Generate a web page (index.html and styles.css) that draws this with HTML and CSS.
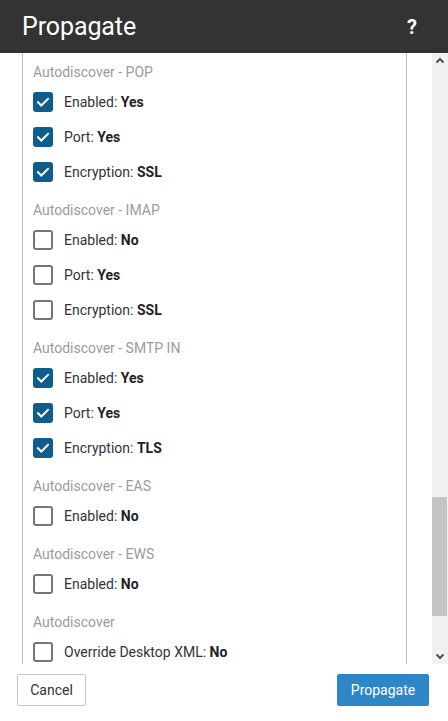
FILE: index.html
```html
<!DOCTYPE html>
<html>
<head>
<meta charset="utf-8">
<link rel="stylesheet" href="styles.css">
</head>
<body>
<div class="dialog">
  <header class="titlebar">
    <h1 class="title">Propagate</h1>
    <span class="help">?</span>
  </header>
  <main class="body">
    <div class="panel">
      <section class="group">
        <div class="group-title">Autodiscover - POP</div>
        <label class="item"><span class="cb on"><svg viewBox="0 0 20 20"><path d="M5 10.2l3.3 3.3L15 6.8"/></svg></span><span class="txt">Enabled: <b>Yes</b></span></label>
        <label class="item"><span class="cb on"><svg viewBox="0 0 20 20"><path d="M5 10.2l3.3 3.3L15 6.8"/></svg></span><span class="txt">Port: <b>Yes</b></span></label>
        <label class="item"><span class="cb on"><svg viewBox="0 0 20 20"><path d="M5 10.2l3.3 3.3L15 6.8"/></svg></span><span class="txt">Encryption: <b>SSL</b></span></label>
      </section>
      <section class="group">
        <div class="group-title">Autodiscover - IMAP</div>
        <label class="item"><span class="cb"></span><span class="txt">Enabled: <b>No</b></span></label>
        <label class="item"><span class="cb"></span><span class="txt">Port: <b>Yes</b></span></label>
        <label class="item"><span class="cb"></span><span class="txt">Encryption: <b>SSL</b></span></label>
      </section>
      <section class="group">
        <div class="group-title">Autodiscover - SMTP IN</div>
        <label class="item"><span class="cb on"><svg viewBox="0 0 20 20"><path d="M5 10.2l3.3 3.3L15 6.8"/></svg></span><span class="txt">Enabled: <b>Yes</b></span></label>
        <label class="item"><span class="cb on"><svg viewBox="0 0 20 20"><path d="M5 10.2l3.3 3.3L15 6.8"/></svg></span><span class="txt">Port: <b>Yes</b></span></label>
        <label class="item"><span class="cb on"><svg viewBox="0 0 20 20"><path d="M5 10.2l3.3 3.3L15 6.8"/></svg></span><span class="txt">Encryption: <b>TLS</b></span></label>
      </section>
      <section class="group">
        <div class="group-title">Autodiscover - EAS</div>
        <label class="item"><span class="cb"></span><span class="txt">Enabled: <b>No</b></span></label>
      </section>
      <section class="group">
        <div class="group-title">Autodiscover - EWS</div>
        <label class="item"><span class="cb"></span><span class="txt">Enabled: <b>No</b></span></label>
      </section>
      <section class="group">
        <div class="group-title">Autodiscover</div>
        <label class="item"><span class="cb"></span><span class="txt">Override Desktop XML: <b>No</b></span></label>
      </section>
    </div>
    <div class="scrollbar">
      <div class="arrow"><svg viewBox="0 0 16 16"><path d="M4.5 9.5L8 6l3.5 3.5"/></svg></div>
      <div class="track"><div class="thumb"></div></div>
      <div class="arrow"><svg viewBox="0 0 16 16"><path d="M4.5 6.5L8 10l3.5-3.5"/></svg></div>
    </div>
  </main>
  <footer class="footer">
    <button class="btn cancel">Cancel</button>
    <button class="btn primary">Propagate</button>
  </footer>
</div>
</body>
</html>
```
FILE: styles.css
```css
html, body {
  margin: 0;
  padding: 0;
  background: #fff;
}
body {
  font-family: Roboto, "Liberation Sans", Arial, sans-serif;
  color: #333;
}
.dialog {
  width: 448px;
  height: 721px;
  display: flex;
  flex-direction: column;
}
.titlebar {
  height: 53px;
  flex: 0 0 53px;
  background: #333333;
  display: flex;
  align-items: center;
  justify-content: space-between;
  padding: 0 31px 0 22px;
  box-sizing: border-box;
}
.title {
  margin: 0;
  font-size: 25px;
  font-weight: 400;
  color: #fff;
  line-height: 1;
  letter-spacing: -0.1px;
}
.help {
  color: #fff;
  font-weight: 700;
  font-size: 20px;
  line-height: 1;
}
.body {
  height: 611px;
  flex: 0 0 611px;
  display: flex;
  overflow: hidden;
}
.panel {
  margin-left: 22px;
  width: 385px;
  border-left: 1px solid #b9b9b9;
  border-right: 1px solid #b9b9b9;
  padding: 9px 0 0 10px;
  box-sizing: border-box;
  overflow: hidden;
}
.group {
  margin-bottom: 11px;
}
.group-title {
  font-size: 14px;
  line-height: 20px;
  color: #9b9b9b;
  margin-bottom: 2px;
}
.item {
  display: flex;
  align-items: center;
  height: 35px;
}
.cb {
  width: 20px;
  height: 20px;
  box-sizing: border-box;
  border: 2px solid #767676;
  border-radius: 3px;
  background: #fff;
  flex: 0 0 20px;
  display: flex;
}
.cb.on {
  border-color: #0f5d8c;
  background: #0f5d8c;
}
.cb svg {
  width: 20px;
  height: 20px;
  margin: -2px;
}
.cb svg path {
  fill: none;
  stroke: #fff;
  stroke-width: 2;
  stroke-linecap: square;
}
.txt {
  margin-left: 11px;
  font-size: 14px;
  color: #333;
}
.txt b {
  color: #222;
  font-weight: 700;
}
.scrollbar {
  margin-left: auto;
  width: 16px;
  background: #f1f1f1;
  display: flex;
  flex-direction: column;
}
.arrow {
  height: 16px;
  flex: 0 0 16px;
  display: flex;
}
.arrow svg {
  width: 16px;
  height: 16px;
}
.arrow svg path {
  fill: none;
  stroke: #505050;
  stroke-width: 2;
}
.track {
  flex: 1;
  position: relative;
}
.thumb {
  position: absolute;
  left: 0;
  right: 1px;
  top: 428px;
  height: 119px;
  background: #c4c4c4;
}
.footer {
  flex: 1;
  display: flex;
  justify-content: space-between;
  align-items: flex-start;
  padding: 10px 19px 0 17px;
}
.btn {
  height: 32px;
  font-family: Roboto, "Liberation Sans", Arial, sans-serif;
  font-size: 14px;
  border-radius: 2px;
  cursor: pointer;
  padding: 0;
}
.cancel {
  width: 69px;
  background: #fff;
  color: #333;
  border: 1px solid #c8c8c8;
}
.primary {
  width: 92px;
  background: #2e86c6;
  color: #fff;
  border: 1px solid #2e86c6;
}
```
